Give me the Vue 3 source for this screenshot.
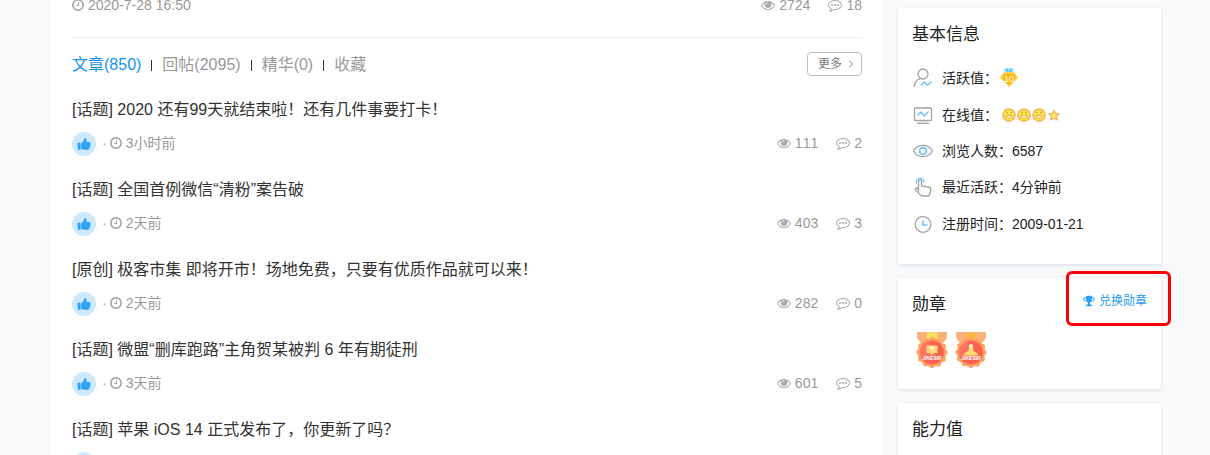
<template>
  <div class="page">
    <main class="posts">
      <div class="meta last-reply">
        <span class="time">
          <svg class="icon-clock" viewBox="128 0 1536 1792"><path :d="icons.clock" /></svg>
          2020-7-28 16:50
        </span>
        <span class="count">
          <svg class="icon" viewBox="0 0 1792 1792"><path :d="icons.eye" /></svg>
          2724
        </span>
        <span class="count">
          <svg class="icon" viewBox="0 0 1792 1792"><path :d="icons.comment" /></svg>
          18
        </span>
      </div>

      <div class="tab-bar">
        <nav class="tabs">
          <a
            v-for="(tab, index) in tabs"
            :key="tab"
            href="#"
            class="tab"
            :class="{ active: index === activeTab }"
            @click.prevent="activeTab = index"
          >{{ tab }}</a>
        </nav>
        <button class="more" type="button">
          更多
          <svg class="icon-arrow" viewBox="0 0 6 8"><path d="M1.5 1 L4.5 4 L1.5 7" /></svg>
        </button>
      </div>

      <article v-for="post in posts" :key="post.title" class="post">
        <h2 class="post-title"><a href="#">{{ post.title }}</a></h2>
        <div class="meta">
          <span class="avatar">
            <svg viewBox="0 0 14 14">
              <rect x="0.6" y="5.8" width="3" height="7" rx="0.6" />
              <path d="M4.3 6 C5.6 5.4 6.8 3.8 7.1 2.2 C7.3 0.9 9.2 0.7 9.5 2.4 C9.7 3.5 9.3 4.5 9 5.1 H12.1 C13.4 5.2 13.8 6.3 13.2 7 C13.8 7.6 13.6 8.6 12.9 8.9 C13.3 9.6 13 10.4 12.4 10.7 C12.7 11.9 12 12.7 10.8 12.7 H7.8 C6.4 12.7 5.5 12.2 4.3 12 Z" />
            </svg>
          </span>
          <span class="dot">·</span>
          <span class="time">
            <svg class="icon-clock" viewBox="128 0 1536 1792"><path :d="icons.clock" /></svg>
            {{ post.time }}
          </span>
          <span class="count">
            <svg class="icon" viewBox="0 0 1792 1792"><path :d="icons.eye" /></svg>
            {{ post.views }}
          </span>
          <span class="count">
            <svg class="icon" viewBox="0 0 1792 1792"><path :d="icons.comment" /></svg>
            {{ post.replies }}
          </span>
        </div>
      </article>
    </main>

    <aside class="sidebar">
      <section class="card info-card">
        <h3>基本信息</h3>
        <ul class="info">
          <li>
            <svg class="info-icon" viewBox="0 0 20 20">
              <circle cx="10" cy="6" r="5" />
              <path d="M1.3 19 C1.3 14.5 3.8 11.6 7.2 10.6" />
              <path class="accent" d="M8 17.5 L11.5 14 L14.5 17 L18.5 13.5" />
            </svg>
            <span>活跃值：</span>
            <svg class="level" viewBox="0 0 20 20">
              <rect x="5.5" y="0.5" width="9" height="5" fill="#7fdcf6" />
              <path d="M8.5 0.5 V5 M11.5 0.5 V5" stroke="#4dbde8" />
              <path d="M5 4 H15 L19.3 9.6 L10 19.3 L0.7 9.6 Z" fill="#ffd667" />
              <path d="M5.6 5.4 H14.4 L17.5 9.6 L10 17.5 L2.5 9.6 Z" fill="#fdb90b" />
              <text x="10" y="14" text-anchor="middle">10</text>
            </svg>
          </li>
          <li>
            <svg class="info-icon" viewBox="0 0 20 20">
              <rect x="1.5" y="3" width="17" height="12.5" rx="1" />
              <path d="M4 18.3 H16" />
              <path class="accent" d="M4.5 10.5 L8 7 L11.5 11 L15.5 6.5" />
            </svg>
            <span>在线值：</span>
            <span class="online">
              <svg v-for="n in 3" :key="n" class="face" viewBox="0 0 14 14">
                <circle cx="7" cy="7" r="6" fill="#ffe94d" stroke="#f7ae54" stroke-width="1.5" />
                <path d="M5 3.8 V5.8 M9 3.8 V5.8" stroke="#c98a1d" />
                <path d="M3.7 7.6 H10.3 C9.8 11.2 4.2 11.2 3.7 7.6 Z" fill="#fffbe0" stroke="#d79a2b" stroke-width="0.8" />
              </svg>
              <svg class="face" viewBox="0 0 14 14">
                <path d="M7 2.2 L8.5 5.5 L12 5.9 L9.4 8.3 L10.2 12 L7 10.2 L3.8 12 L4.6 8.3 L2 5.9 L5.5 5.5 Z" fill="#fff06a" stroke="#f9b25a" stroke-width="1.3" stroke-linejoin="round" />
              </svg>
            </span>
          </li>
          <li>
            <svg class="info-icon" viewBox="0 0 20 20">
              <path d="M0.6 10 C4.5 2.5 15.5 2.5 19.4 10 C15.5 17.5 4.5 17.5 0.6 10 Z" />
              <circle class="accent thick" cx="10" cy="10" r="3.4" />
            </svg>
            <span>浏览人数：</span>
            <span>6587</span>
          </li>
          <li>
            <svg class="info-icon" viewBox="0 0 20 20">
              <path class="accent" d="M3.2 6.5 C2.2 0.2 11 -0.2 10.8 5.5" />
              <path d="M5.5 13 V4.6 C5.5 2.5 8.6 2.5 8.6 4.6 V9 L15.5 10 C17.3 10.3 18 11.3 17.8 13 L17 17 C16.7 18.4 16 19 14.5 19 H10 C8.6 19 7.8 18.6 7 17.6 L2.5 12.8 C1.6 11.3 3.3 10.1 4.5 11.3 Z" />
            </svg>
            <span>最近活跃：</span>
            <span>4分钟前</span>
          </li>
          <li>
            <svg class="info-icon" viewBox="0 0 20 20">
              <circle cx="10" cy="10.5" r="7.8" />
              <path class="accent thick" d="M9.8 6.5 V11 H14.5" />
            </svg>
            <span>注册时间：</span>
            <span>2009-01-21</span>
          </li>
        </ul>
      </section>

      <section class="card medal-card">
        <header class="card-head">
          <h3>勋章</h3>
          <a href="#" class="exchange">
            <svg class="icon-trophy" viewBox="0 0 1792 1792"><path :d="icons.trophy" /></svg>
            兑换勋章
          </a>
        </header>
        <div class="medals">
          <svg v-for="medal in medals" :key="medal.ribbon" class="medal" viewBox="0 0 32 36">
            <path d="M1.5 0.5 H30.5 V6 L25 13 H7 L1.5 6 Z" fill="#fcb078" stroke="#e9a27a" stroke-width="0.6" />
            <path d="M11 0.5 H21.5 V9 H11 Z" :fill="medal.ribbon" />
            <circle cx="16" cy="20.5" r="14.2" fill="#fca468" />
            <circle cx="16" cy="20.5" r="12.8" class="scallop" />
            <circle cx="16" cy="20.5" r="12" fill="#fb5f52" stroke="#f58a4e" stroke-width="0.8" />
            <path d="M6 26.5 A11.8 11.8 0 0 1 12 9.6 L22 26.5 Z" fill="#fd7562" />
            <path :d="medal.shape" fill="#ffda72" />
            <circle cx="16" :cy="medal.spot" r="2" fill="#fff3c4" />
            <text x="16" y="28" text-anchor="middle">JIKESIR</text>
          </svg>
        </div>
        <span class="highlight"></span>
      </section>

      <section class="card ability-card">
        <h3>能力值</h3>
      </section>
    </aside>
  </div>
</template>

<script setup>
import { ref } from 'vue'

const activeTab = ref(0)

const tabs = ['文章(850)', '回帖(2095)', '精华(0)', '收藏']

const posts = [
  { title: '[话题] 2020 还有99天就结束啦！还有几件事要打卡！', time: '3小时前', views: 111, replies: 2 },
  { title: '[话题] 全国首例微信“清粉”案告破', time: '2天前', views: 403, replies: 3 },
  { title: '[原创] 极客市集 即将开市！场地免费，只要有优质作品就可以来！', time: '2天前', views: 282, replies: 0 },
  { title: '[话题] 微盟“删库跑路”主角贺某被判 6 年有期徒刑', time: '3天前', views: 601, replies: 5 },
  { title: '[话题] 苹果 iOS 14 正式发布了，你更新了吗？' }
]

const medals = [
  { ribbon: '#fbe05c', shape: 'M10.5 13.5 H21.5 V21 H18 L16 23 L14 21 H10.5 Z', spot: 16 },
  { ribbon: '#fbb445', shape: 'M14.5 13 H17.5 L18.5 19 L23 21.5 V23.5 H9 V21.5 L13.5 19 Z', spot: 14 }
]

const icons = {
  eye: 'M1664 960q-152-236-381-353 61 104 61 225 0 185-131.5 316.5t-316.5 131.5-316.5-131.5-131.5-316.5q0-121 61-225-229 117-381 353 133 205 333.5 326.5t434.5 121.5 434.5-121.5 333.5-326.5zm-720-384q0-20-14-34t-34-14q-125 0-214.5 89.5t-89.5 214.5q0 20 14 34t34 14 34-14 14-34q0-86 61-147t147-61q20 0 34-14t14-34zm848 384q0 34-20 69-140 230-376.5 368.5t-499.5 138.5-499.5-139-376.5-368q-20-35-20-69t20-69q140-229 376.5-368t499.5-139 499.5 139 376.5 368q20 35 20 69z',
  clock: 'M1024 544v448q0 14-9 23t-23 9h-320q-14 0-23-9t-9-23v-64q0-14 9-23t23-9h224v-352q0-14 9-23t23-9h64q14 0 23 9t9 23zm416 352q0-148-73-273t-198-198-273-73-273 73-198 198-73 273 73 273 198 198 273 73 273-73 198-198 73-273zm224 0q0 209-103 385.5t-279.5 279.5-385.5 103-385.5-103-279.5-279.5-103-385.5 103-385.5 279.5-279.5 385.5-103 385.5 103 279.5 279.5 103 385.5z',
  comment: 'M640 896q0 53-37.5 90.5t-90.5 37.5-90.5-37.5-37.5-90.5 37.5-90.5 90.5-37.5 90.5 37.5 37.5 90.5zm384 0q0 53-37.5 90.5t-90.5 37.5-90.5-37.5-37.5-90.5 37.5-90.5 90.5-37.5 90.5 37.5 37.5 90.5zm384 0q0 53-37.5 90.5t-90.5 37.5-90.5-37.5-37.5-90.5 37.5-90.5 90.5-37.5 90.5 37.5 37.5 90.5zm-512-512q-204 0-381.5 69.5t-282 187.5-104.5 255q0 112 71.5 213.5t201.5 175.5l87 50-27 96q-24 91-70 172 152-63 275-171l43-38 57 6q69 8 130 8 204 0 381.5-69.5t282-187.5 104.5-255-104.5-255-282-187.5-381.5-69.5zm896 512q0 174-120 321.5t-326 233-450 85.5q-70 0-145-8-198 175-460 242-49 14-114 22h-5q-15 0-27-10.5t-16-27.5v-1q-3-4-.5-12t2-10 4.5-9.5l6-9 7-8.5 8-9q7-8 31-34.5t34.5-38 31-39.5 32.5-51 27-59 26-76q-157-89-247.5-220t-90.5-281q0-174 120-321.5t326-233 450-85.5 450 85.5 326 233 120 321.5z',
  trophy: 'M522 883q-74-162-74-371h-256v96q0 78 94.5 162t235.5 113zm1078-275v-96h-256q0 209-74 371 141-29 235.5-113t94.5-162zm128-128v128q0 71-41.5 143t-112 130-173 97.5-215.5 44.5q-42 54-95 95-38 34-52.5 72.5t-14.5 89.5q0 54 30.5 91t97.5 37q75 0 133.5 45.5t58.5 114.5v64q0 14-9 23t-23 9h-832q-14 0-23-9t-9-23v-64q0-69 58.5-114.5t133.5-45.5q67 0 97.5-37t30.5-91q0-51-14.5-89.5t-52.5-72.5q-53-41-95-95-113-5-215.5-44.5t-173-97.5-112-130-41.5-143v-128q0-40 28-68t68-28h288v-96q0-66 47-113t113-47h576q66 0 113 47t47 113v96h288q40 0 68 28t28 68z'
}
</script>

<style>
body {
  background: #f7f9fb;
}
</style>

<style scoped>
* {
  box-sizing: border-box;
}

.page {
  display: flex;
  gap: 15px;
  height: 100vh;
  padding: 0 49px 0 51px;
  overflow: hidden;
  font-family: 'Liberation Sans', 'Noto Sans CJK SC', sans-serif;
  font-size: 14px;
  font-kerning: none;
  color: #333;
}

a {
  color: inherit;
  text-decoration: none;
}

h2,
h3,
ul {
  margin: 0;
  padding: 0;
  font-weight: 400;
}

/* Posts */
.posts {
  flex: 1;
  min-width: 0;
  height: max-content;
  padding: 0 21px;
  background: #fff;
}

.meta {
  display: flex;
  align-items: center;
  height: 24px;
  line-height: 20px;
  color: #999;
}

.last-reply {
  height: 11px;
  margin-bottom: 26px;
}

.time,
.count {
  display: flex;
  align-items: center;
  gap: 4px;
  padding-bottom: 2px;
}

.time {
  margin-right: auto;
}

.count {
  margin-left: 18px;
}

.icon,
.icon-clock {
  width: 14px;
  height: 14px;
  fill: #aaa;
}

.icon-clock {
  width: 12px;
}

.tab-bar {
  display: flex;
  align-items: center;
  justify-content: space-between;
  height: 53px;
  border-top: 1px solid #e9ebed;
}

.tabs {
  display: flex;
  padding-top: 2px;
  font-size: 16px;
  line-height: 24px;
}

.tab {
  display: flex;
  align-items: center;
  color: #999;
}

.tab.active {
  color: #1296ee;
}

.tab + .tab::before {
  content: '';
  width: 1px;
  height: 11px;
  margin: 0 10px;
  background: #333;
}

.more {
  display: flex;
  align-items: center;
  justify-content: center;
  gap: 6px;
  width: 55px;
  height: 24px;
  padding: 0 0 0 3px;
  background: #fff;
  border: 1px solid #b4bfcb;
  border-radius: 4px;
  font-family: inherit;
  font-size: 12px;
  line-height: 18px;
  color: #777;
  cursor: pointer;
}

.icon-arrow {
  width: 6px;
  height: 8px;
  fill: none;
  stroke: #777;
}

.post {
  padding: 8px 0 14px;
}

.post-title {
  margin-bottom: 10px;
  font-size: 16px;
  line-height: 24px;
}

.avatar {
  display: flex;
  align-items: center;
  justify-content: center;
  width: 24px;
  height: 24px;
  background: #cbe8fd;
  border-radius: 50%;
}

.avatar svg {
  width: 14px;
  height: 14px;
  fill: #2aa1f5;
}

.dot {
  margin: 0 3px 0 6px;
  padding-bottom: 2px;
}

/* Sidebar */
.sidebar {
  display: flex;
  flex-direction: column;
  gap: 14px;
  flex: 0 0 263px;
  height: max-content;
  padding-top: 8px;
}

.card {
  position: relative;
  padding: 15px 14px;
  background: #fff;
  box-shadow: 0 1px 3px rgba(30, 50, 80, 0.12);
}

.card h3 {
  font-size: 17px;
  line-height: 24px;
  color: #222;
}

.info-card {
  padding-bottom: 22px;
}

.info {
  display: grid;
  grid-auto-rows: 1fr;
  height: 182px;
  margin-top: 13px;
  line-height: 20px;
  list-style: none;
  color: #222;
}

.info li {
  display: flex;
  align-items: center;
}

.info-icon {
  width: 20px;
  height: 20px;
  margin: 0 9px 0 1px;
  fill: none;
  stroke: #a3a3a3;
  stroke-width: 1.3;
}

.info-icon .accent {
  stroke: #6cc3f8;
}

.info-icon .thick {
  stroke-width: 1.7;
}

.level {
  width: 20px;
  height: 20px;
  margin-left: 1px;
}

.level text {
  font-size: 9px;
  fill: #fff;
}

.online {
  display: flex;
  gap: 1px;
  margin-left: 4px;
}

.face {
  width: 14px;
  height: 14px;
  fill: none;
}

.card-head {
  display: flex;
  justify-content: space-between;
}

.exchange {
  display: flex;
  align-items: center;
  gap: 4px;
  height: 16px;
  font-size: 12px;
  line-height: 16px;
  color: #1e9bf0;
}

.icon-trophy {
  width: 12px;
  height: 12px;
  fill: #2aa1f5;
}

.medals {
  display: flex;
  gap: 7px;
  padding: 15px 4px 6px;
}

.medal {
  width: 32px;
  height: 36px;
}

.medal text {
  font-size: 5px;
  font-style: italic;
  font-weight: 700;
  fill: #fff;
}

.scallop {
  fill: none;
  stroke: #fca468;
  stroke-width: 5.6;
  stroke-linecap: round;
  stroke-dasharray: 0 6.702;
}

.highlight {
  position: absolute;
  top: -7px;
  right: -10px;
  width: 105px;
  height: 55px;
  border: 3px solid #fc0006;
  border-radius: 6px;
  pointer-events: none;
}

.ability-card {
  min-height: 120px;
}
</style>
